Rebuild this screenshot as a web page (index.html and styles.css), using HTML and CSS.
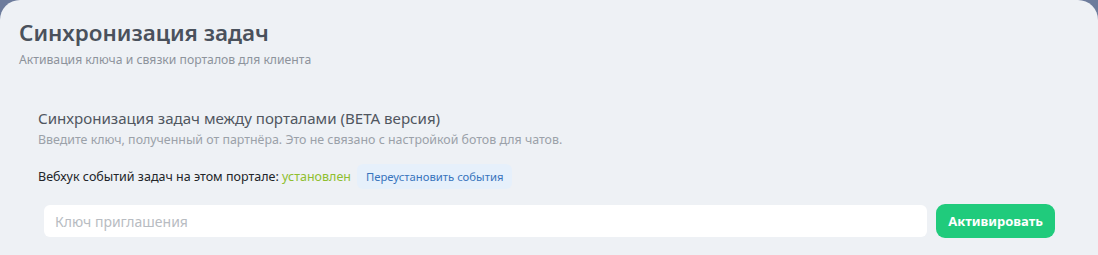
FILE: index.html
```html
<!DOCTYPE html>
<html lang="ru">
<head>
<meta charset="utf-8">
<link rel="stylesheet" href="styles.css">
</head>
<body>
<div class="panel">
  <header class="head">
    <h1 class="title">Синхронизация задач</h1>
    <p class="subtitle">Активация ключа и связки порталов для клиента</p>
  </header>
  <section class="section">
    <h2 class="sec-title">Синхронизация задач между порталами (BETA версия)</h2>
    <p class="sec-desc">Введите ключ, полученный от партнёра. Это не связано с настройкой ботов для чатов.</p>
    <div class="hook">
      <span class="hook-label">Вебхук событий задач на этом портале: <span class="ok">установлен</span></span>
      <button class="btn-re">Переустановить события</button>
    </div>
    <div class="form">
      <input class="key" type="text" placeholder="Ключ приглашения">
      <button class="btn-go">Активировать</button>
    </div>
  </section>
</div>
</body>
</html>
```
FILE: styles.css
```css
html, body {
  margin: 0;
  padding: 0;
  background: #6d7c9c;
  height: 255px;
  overflow: hidden;
}
body {
  font-family: "Noto Sans", "Open Sans", sans-serif;
}
.panel {
  background: #eef1f5;
  border-radius: 20px 20px 0 0;
  height: 255px;
  box-sizing: border-box;
  padding: 18px 0 0 19px;
}
.title {
  margin: 0;
  font-size: 22.4px;
  font-weight: 600;
  color: #4a515c;
  line-height: 30px;
}
.subtitle {
  margin: 4px 0 0;
  font-size: 12.2px;
  color: #8d939c;
  line-height: 16px;
}
.section {
  padding: 40px 0 0 19px;
}
.sec-title {
  margin: 0;
  font-size: 15.1px;
  font-weight: 400;
  color: #50565f;
  line-height: 20px;
}
.sec-desc {
  margin: 4px 0 0;
  font-size: 12.4px;
  color: #9ba1a9;
  line-height: 16px;
}
.hook {
  display: flex;
  align-items: center;
  gap: 6px;
  margin-top: 16px;
}
.hook-label {
  font-size: 12.5px;
  color: #222529;
}
.ok {
  color: #8fbf2f;
}
.btn-re {
  font-family: inherit;
  font-size: 11.3px;
  color: #3874bd;
  background: #e6f0fb;
  border: none;
  border-radius: 6px;
  padding: 5px 9px;
}
.form {
  display: flex;
  align-items: center;
  gap: 9px;
  margin-top: 15px;
  padding: 0 43px 0 6px;
}
.key {
  flex: 1;
  height: 32px;
  box-sizing: border-box;
  border: none;
  border-radius: 6px;
  background: #ffffff;
  padding: 0 11px;
  font-family: inherit;
  font-size: 14px;
  color: #333;
  outline: none;
}
.key::placeholder {
  color: #b8bcc2;
}
.btn-go {
  height: 34px;
  padding: 0 12px;
  border: none;
  border-radius: 9px;
  background: #20cb7c;
  color: #ffffff;
  font-family: inherit;
  font-size: 13px;
  font-weight: 700;
}
```
